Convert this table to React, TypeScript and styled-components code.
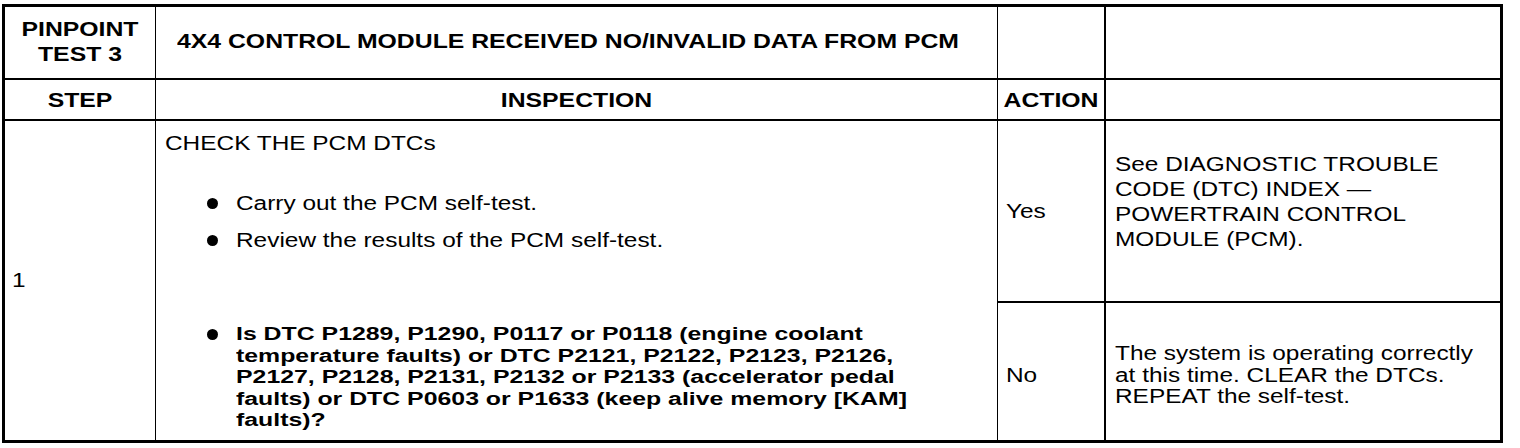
import styled, { createGlobalStyle, css } from 'styled-components';

const GlobalStyle = createGlobalStyle`
  *, *::before, *::after {
    box-sizing: border-box;
  }
  html, body {
    margin: 0;
    padding: 0;
    background: #fff;
  }
  body {
    font-family: 'Liberation Sans', Arial, Helvetica, sans-serif;
    color: #000;
  }
`;

// the printed sheet uses a wide face; widen glyphs while wrapping inside the cell
const stretch = (x: number) => css`
  width: ${100 / x}%;
  transform: scaleX(${x});
  transform-origin: left center;
`;

const Sheet = styled.div`
  display: grid;
  grid-template-columns: 151px 842px 108px 394px;
  grid-template-rows: 73px 41px 182px 137px;
  width: 1501px;
  margin: 4px 0 0 2px;
  border: 3px solid #000;
`;

const Cell = styled.div<{ $right?: number; $bottom?: number; $span?: number; $pad?: string }>`
  display: flex;
  flex-direction: column;
  justify-content: center;
  min-width: 0;
  grid-row: ${(p) => (p.$span ? `span ${p.$span}` : 'auto')};
  border-right: ${(p) => p.$right ?? 0}px solid #000;
  border-bottom: ${(p) => p.$bottom ?? 0}px solid #000;
  padding: ${(p) => p.$pad ?? '0'};
`;

const InspectionCell = styled(Cell)`
  justify-content: flex-start;
`;

const HeadText = styled.div<{ $center?: boolean }>`
  ${stretch(1.18)}
  font-size: 21px;
  font-weight: 700;
  line-height: 25px;
  text-align: ${(p) => (p.$center ? 'center' : 'left')};
`;

const Text = styled.div<{ $tight?: boolean }>`
  ${stretch(1.22)}
  font-size: 20px;
  line-height: ${(p) => (p.$tight ? '21.5px' : '25px')};
`;

const BoldText = styled.div`
  ${stretch(1.38)}
  font-size: 18px;
  font-weight: 700;
  line-height: 21.5px;
`;

const Checks = styled.ul`
  list-style: none;
  margin: 35px 0 0 42px;
  padding: 0;
  display: flex;
  flex-direction: column;
  gap: 12px;
`;

const Check = styled.li<{ $gapAbove?: number }>`
  display: flex;
  margin-top: ${(p) => p.$gapAbove ?? 0}px;
`;

const Mark = styled.span<{ $top: number }>`
  flex: 0 0 29px;
  &::before {
    content: '';
    display: block;
    width: 11px;
    height: 11px;
    margin-top: ${(p) => p.$top}px;
    border-radius: 50%;
    background: #000;
  }
`;

const CheckBody = styled.div`
  flex: 1;
  min-width: 0;
`;

export default function App() {
  return (
    <>
      <GlobalStyle />
      <Sheet>
        <Cell $right={1} $bottom={2} $pad="0 0 4px">
          <HeadText $center>PINPOINT TEST 3</HeadText>
        </Cell>
        <Cell $right={1} $bottom={2} $pad="0 0 4px 21px">
          <HeadText>4X4 CONTROL MODULE RECEIVED NO/INVALID DATA FROM PCM</HeadText>
        </Cell>
        <Cell $right={2} $bottom={2} />
        <Cell $bottom={2} />

        <Cell $right={1} $bottom={2}>
          <HeadText $center>STEP</HeadText>
        </Cell>
        <Cell $right={1} $bottom={2}>
          <HeadText $center>INSPECTION</HeadText>
        </Cell>
        <Cell $right={2} $bottom={2}>
          <HeadText $center>ACTION</HeadText>
        </Cell>
        <Cell $bottom={2} />

        <Cell $right={1} $span={2} $pad="0 0 0 7px">
          <Text>1</Text>
        </Cell>
        <InspectionCell $right={1} $span={2} $pad="10px 56px 0 9px">
          <Text>CHECK THE PCM DTCs</Text>
          <Checks>
            <Check>
              <Mark $top={7} />
              <CheckBody>
                <Text>Carry out the PCM self-test.</Text>
              </CheckBody>
            </Check>
            <Check>
              <Mark $top={7} />
              <CheckBody>
                <Text>Review the results of the PCM self-test.</Text>
              </CheckBody>
            </Check>
            <Check $gapAbove={59}>
              <Mark $top={5} />
              <CheckBody>
                <BoldText>
                  Is DTC P1289, P1290, P0117 or P0118 (engine coolant temperature faults) or DTC P2121,
                  P2122, P2123, P2126, P2127, P2128, P2131, P2132 or P2133 (accelerator pedal faults) or
                  DTC P0603 or P1633 (keep alive memory [KAM] faults)?
                </BoldText>
              </CheckBody>
            </Check>
          </Checks>
        </InspectionCell>
        <Cell $right={2} $bottom={2} $pad="0 0 0 8px">
          <Text>Yes</Text>
        </Cell>
        <Cell $bottom={2} $pad="0 6px 18px 9px">
          <Text>See DIAGNOSTIC TROUBLE CODE (DTC) INDEX — POWERTRAIN CONTROL MODULE (PCM).</Text>
        </Cell>
        <Cell $right={2} $pad="8px 0 0 8px">
          <Text>No</Text>
        </Cell>
        <Cell $pad="8px 6px 0 9px">
          <Text $tight>
            The system is operating correctly at this time. CLEAR the DTCs. REPEAT the self-test.
          </Text>
        </Cell>
      </Sheet>
    </>
  );
}
